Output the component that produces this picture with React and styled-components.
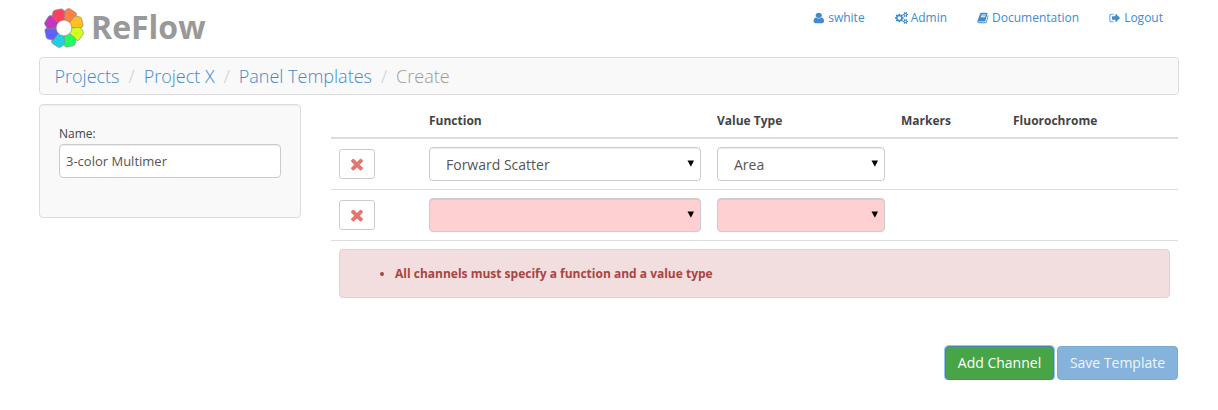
import React from "react";
import styled, { createGlobalStyle } from "styled-components";

const GlobalStyle = createGlobalStyle`
  *, *::before, *::after { box-sizing: border-box; }
  body {
    margin: 0;
    background: #fff;
    color: #444;
    font-family: "Open Sans", "Liberation Sans", sans-serif;
    font-size: 12px;
    line-height: 17px;
  }
`;

const Page = styled.div`
  width: 1140px;
  margin: 0 auto;
`;

const Header = styled.header`
  display: flex;
  justify-content: space-between;
  height: 57px;
  padding: 7px 16px 0 4px;
`;

const Brand = styled.a`
  display: flex;
  align-items: flex-start;
  gap: 6px;
  color: #999;
  font-size: 32px;
  font-weight: 700;
  line-height: 40px;
  svg { display: block; }
`;

const Nav = styled.nav`
  display: flex;
  gap: 30px;
  padding-top: 2px;
`;

const NavLink = styled.a`
  display: flex;
  height: 17px;
  color: #428bca;
  svg { display: block; flex: none; margin: 3px 3px 0 0; }
`;

const Breadcrumb = styled.ol`
  display: flex;
  height: 38px;
  margin: 0 0 9px;
  padding: 0 14.5px;
  list-style: none;
  background: #f9f9f9;
  border: 1px solid #dcdcdc;
  border-radius: 4px;
  font-size: 18px;
  font-weight: 300;
  line-height: 37px;
`;

const Crumb = styled.li`
  color: ${(p) => (p.$active ? "#999" : "#428bca")};
  &:not(:first-child)::before {
    content: "/";
    padding: 0 9px;
    color: #ccc;
  }
`;

const Columns = styled.main`
  display: flex;
  align-items: flex-start;
  gap: 30px;
  padding-right: 1px;
`;

const Well = styled.section`
  flex: none;
  width: 262px;
  height: 114px;
  padding: 20px 19px;
  background: #f9f9f9;
  border: 1px solid #dcdcdc;
  border-radius: 4px;
  box-shadow: inset 0 1px 1px rgba(0, 0, 0, 0.05);
`;

const Label = styled.label`
  display: block;
  height: 19px;
`;

const TextInput = styled.input`
  display: block;
  width: 222px;
  height: 34px;
  padding: 0 6px;
  border: 1px solid #ccc;
  border-radius: 4px;
  box-shadow: inset 0 1px 1px rgba(0, 0, 0, 0.075);
  background: #fff;
  color: #555;
  font: 13px "Open Sans", sans-serif;
`;

const Content = styled.section`
  flex: 1;
`;

const Row = styled.div`
  display: grid;
  grid-template-columns: 90px 288px 184px 112px 1fr;
  align-items: center;
  height: 51px;
  border-bottom: 1px solid #ddd;
`;

const HeadRow = styled(Row)`
  height: 35px;
  border-bottom-width: 2px;
  font-weight: 700;
`;

const Cell = styled.div`
  padding: 0 8px;
`;

const RemoveButton = styled.button`
  display: flex;
  align-items: center;
  justify-content: center;
  width: 36px;
  height: 30px;
  padding: 0;
  border: 1px solid #ccc;
  border-radius: 3px;
  background: #fff;
  color: #e27670;
`;

const SelectBox = styled.div`
  display: flex;
  align-items: center;
  justify-content: space-between;
  height: 34px;
  padding: 0 6px 0 16px;
  border: 1px solid #ccc;
  border-radius: 4px;
  box-shadow: inset 0 1px 1px rgba(0, 0, 0, 0.075);
  background: ${(p) => (p.$invalid ? "#ffd0d2" : "#fff")};
  color: #555;
  font-size: 14px;
  line-height: 20px;
  svg { display: block; margin-bottom: 1px; }
`;

const SelectText = styled.span`
  padding-top: 2px;
`;

const ErrorList = styled.ul`
  height: 49px;
  margin: 8px 8px 48px;
  padding: 15px 15px 15px 55px;
  border: 1px solid #ebccd1;
  border-radius: 4px;
  background: #f2dede;
  color: #a94442;
  font-weight: 700;
`;

const Actions = styled.div`
  display: flex;
  justify-content: flex-end;
  gap: 3px;
`;

const ActionButton = styled.button`
  width: ${(p) => p.$width}px;
  height: 34px;
  padding: 0;
  border: 1px solid ${(p) => (p.$primary ? "#78aad6" : p.$focused ? "#4287a8" : "#3c923c")};
  border-radius: 4px;
  background: ${(p) => (p.$primary ? "#85b3dc" : "#47a447")};
  box-shadow: ${(p) => (p.$focused ? "0 0 0 1px #9dbff5" : "none")};
  color: ${(p) => (p.$primary ? "#f0f6fb" : "#fff")};
  font: 14px/20px "Open Sans", sans-serif;
`;

const USER =
  "M1536 1399q0 109-62.5 187t-150.5 78h-854q-88 0-150.5-78t-62.5-187q0-85 8.5-160.5t31.5-152 58.5-131 94-89 134.5-34.5q131 128 313 128t313-128q76 0 134.5 34.5t94 89 58.5 131 31.5 152 8.5 160.5zm-256-887q0 159-112.5 271.5t-271.5 112.5-271.5-112.5-112.5-271.5 112.5-271.5 271.5-112.5 271.5 112.5 112.5 271.5z";
const TIMES =
  "M1490 1322q0 40-28 68l-136 136q-28 28-68 28t-68-28l-294-294-294 294q-28 28-68 28t-68-28l-136-136q-28-28-28-68t28-68l294-294-294-294q-28-28-28-68t28-68l136-136q28-28 68-28t68 28l294 294 294-294q28-28 68-28t68 28l136 136q28 28 28 68t-28 68l-294 294 294 294q28 28 28 68z";
const SIGN_OUT =
  "M704 1440q0 4 1 20t.5 26.5-3 23.5-10 19.5-20.5 6.5h-320q-119 0-203.5-84.5t-84.5-203.5v-704q0-119 84.5-203.5t203.5-84.5h320q13 0 22.5 9.5t9.5 22.5q0 4 1 20t.5 26.5-3 23.5-10 19.5-20.5 6.5h-320q-66 0-113 47t-47 113v704q0 66 47 113t113 47h312l11.5 1 11.5 3 8 5.5 7 9 2 13.5zm928-544q0 26-19 45l-544 544q-19 19-45 19t-45-19-19-45v-288h-448q-26 0-45-19t-19-45v-384q0-26 19-45t45-19h448v-288q0-26 19-45t45-19 45 19l544 544q19 19 19 45z";
const BOOK =
  "M1703 478q40 57 18 129l-275 906q-19 64-76.5 107.5t-122.5 43.5h-923q-77 0-148.5-53.5t-99.5-131.5q-24-67-2-127 0-4 3-27t4-37q1-8-3-21.5t-3-19.5q2-11 8-21t16.5-23.5 16.5-23.5q23-38 45-91.5t30-91.5q3-10 .5-30t-.5-28q3-11 17-28t17-23q21-36 42-92t25-90q1-9-2.5-32t.5-28q4-13 22-30.5t22-22.5q19-26 42.5-84.5t27.5-96.5q1-8-3-25.5t-2-26.5q2-8 9-18t18-23 17-21q8-12 16.5-30.5t15-35 16-36 19.5-32 26.5-23.5 36-11.5 47.5 5.5l-1 3q38-9 51-9h761q74 0 114 56t18 130l-274 906q-36 119-71.5 153.5t-128.5 34.5h-869q-27 0-38 15-11 16-1 43 24 70 144 70h923q29 0 56-15.5t35-41.5l300-987q7-22 5-57 38 15 59 43zm-1064 2q-4 13 2 22.5t20 9.5h608q13 0 25.5-9.5t16.5-22.5l21-64q4-13-2-22.5t-20-9.5h-608q-13 0-25.5 9.5t-16.5 22.5zm-83 256q-4 13 2 22.5t20 9.5h608q13 0 25.5-9.5t16.5-22.5l21-64q4-13-2-22.5t-20-9.5h-608q-13 0-25.5 9.5t-16.5 22.5z";
const SMALL_GEAR =
  "v140q0 16-149 31-12 27-30 52 51 113 51 138 0 4-4 7-122 71-124 71-8 0-46-47t-52-68q-20 2-30 2t-30-2q-14 21-52 68t-46 47q-2 0-124-71-4-3-4-7 0-25 51-138-18-25-30-52-149-15-149-31v-140q0-16 149-31 13-29 30-52-51-113-51-138 0-4 4-7 4-2 35-20t59-34 30-16q8 0 46 46.5t52 67.5q20-2 30-2t30 2q51-71 92-112l6-2q4 0 124 70 4 3 4 7 0 25-51 138 17 23 30 52 149 15 149 31z";
const COGS =
  "M896 896q0-106-75-181t-181-75-181 75-75 181 75 181 181 75 181-75 75-181zm768 512q0-52-38-90t-90-38-90 38-38 90q0 53 37.5 90.5t90.5 37.5 90.5-37.5 37.5-90.5zm0-1024q0-52-38-90t-90-38-90 38-38 90q0 53 37.5 90.5t90.5 37.5 90.5-37.5 37.5-90.5zm-384 421v185q0 10-7 19.5t-16 10.5l-155 24q-11 35-32 76 34 48 90 115 7 11 7 20 0 12-7 19-23 30-82.5 89.5t-78.5 59.5q-11 0-21-7l-115-90q-37 19-77 31-11 108-23 155-7 24-30 24h-186q-11 0-20-7.5t-10-17.5l-23-153q-34-10-75-31l-118 89q-7 7-20 7-11 0-21-8-144-133-144-160 0-9 7-19 10-14 41-53t47-61q-23-44-35-82l-152-24q-10-1-17-9.5t-7-19.5v-185q0-10 7-19.5t16-10.5l155-24q11-35 32-76-34-48-90-115-7-11-7-20 0-12 7-20 22-30 82-89t79-59q11 0 21 7l115 90q34-18 77-32 11-108 23-154 7-24 30-24h186q11 0 20 7.5t10 17.5l23 153q34 10 75 31l118-89q8-7 20-7 11 0 21 8 144 133 144 160 0 8-7 19-12 16-42 54t-45 60q23 48 34 82l152 23q10 2 17 10.5t7 19.5z" +
  "M1920 1338" + SMALL_GEAR + "M1920 314" + SMALL_GEAR;

const Icon = ({ d, size = 12, width = size, box = "0 0 1792 1792" }) => (
  <svg width={width} height={size} viewBox={box} fill="currentColor" preserveAspectRatio="none">
    <path d={d} />
  </svg>
);

const PETALS = ["#ff8040", "#ffc020", "#d0ff20", "#20ff60", "#20d0e0", "#6060ff", "#c038c0", "#ff4060"];

const Logo = () => (
  <svg width="42" height="42" viewBox="-21 -21 42 42">
    {PETALS.map((color, i) => (
      <path
        key={color}
        transform={`rotate(${22.5 + i * 45})`}
        d="M-3 -7.3 L-6.5 -13.5 Q-7 -15 -6 -16.3 L-4.2 -18.9 Q-3.3 -20.2 -1.7 -19.9 L4.5 -18.8 Q6.3 -18.3 6.5 -16.5 L6.5 -13.8 L3 -7.3 Q0 -8.4 -3 -7.3Z"
        fill={color}
        stroke="#888"
        strokeWidth="0.6"
      />
    ))}
  </svg>
);

const Select = ({ value, invalid }) => (
  <SelectBox $invalid={invalid}>
    <SelectText>{value}</SelectText>
    <svg width="7" height="7" viewBox="0 0 7 7">
      <path d="M0.5 0.5H7L3.9 6.7Z" fill="#000" />
    </svg>
  </SelectBox>
);

const CHANNELS = [
  { fn: "Forward Scatter", type: "Area" },
  { fn: "", type: "" },
];

export default function App() {
  return (
    <Page>
      <GlobalStyle />
      <Header>
        <Brand>
          <Logo />
          ReFlow
        </Brand>
        <Nav>
          <NavLink><Icon d={USER} width={12} box="184 0 1472 1792" />swhite</NavLink>
          <NavLink><Icon d={COGS} width={13} box="0 0 1920 1792" />Admin</NavLink>
          <NavLink><Icon d={BOOK} />Documentation</NavLink>
          <NavLink><Icon d={SIGN_OUT} />Logout</NavLink>
        </Nav>
      </Header>
      <Breadcrumb>
        <Crumb>Projects</Crumb>
        <Crumb>Project X</Crumb>
        <Crumb>Panel Templates</Crumb>
        <Crumb $active>Create</Crumb>
      </Breadcrumb>
      <Columns>
        <Well>
          <Label htmlFor="name">Name:</Label>
          <TextInput id="name" defaultValue="3-color Multimer" />
        </Well>
        <Content>
          <HeadRow>
            <Cell />
            <Cell>Function</Cell>
            <Cell>Value Type</Cell>
            <Cell>Markers</Cell>
            <Cell>Fluorochrome</Cell>
          </HeadRow>
          {CHANNELS.map((c, i) => (
            <Row key={i}>
              <Cell>
                <RemoveButton aria-label="Remove channel"><Icon d={TIMES} size={18} /></RemoveButton>
              </Cell>
              <Cell><Select value={c.fn} invalid={!c.fn} /></Cell>
              <Cell><Select value={c.type} invalid={!c.type} /></Cell>
            </Row>
          ))}
          <ErrorList>
            <li>All channels must specify a function and a value type</li>
          </ErrorList>
          <Actions>
            <ActionButton $width={109} $focused>Add Channel</ActionButton>
            <ActionButton $width={121} $primary>Save Template</ActionButton>
          </Actions>
        </Content>
      </Columns>
    </Page>
  );
}
